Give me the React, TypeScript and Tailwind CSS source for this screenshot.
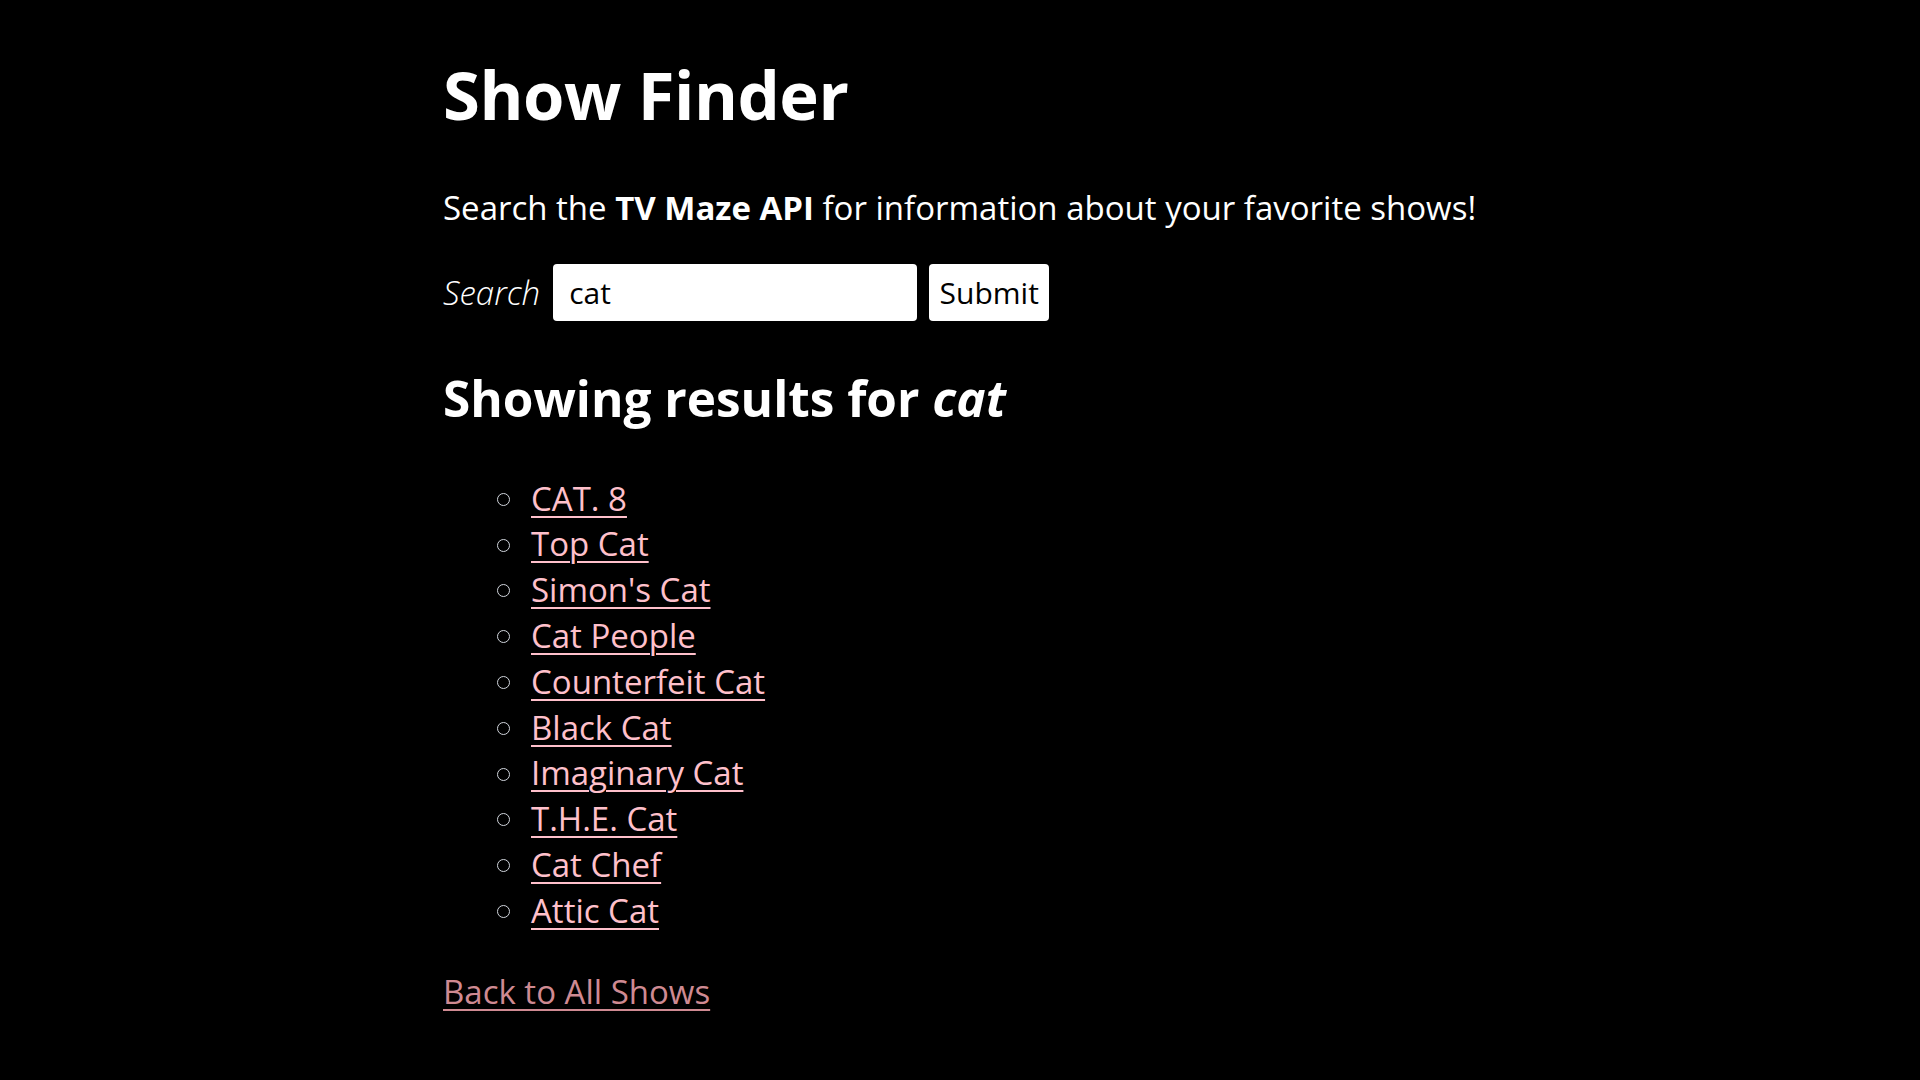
import { useState } from "react"

const shows = [
  "CAT. 8",
  "Top Cat",
  "Simon's Cat",
  "Cat People",
  "Counterfeit Cat",
  "Black Cat",
  "Imaginary Cat",
  "T.H.E. Cat",
  "Cat Chef",
  "Attic Cat",
]

export default function App() {
  const [query, setQuery] = useState("cat")

  return (
    <div className="min-h-screen bg-black text-white font-['Open_Sans','Noto_Sans',sans-serif]">
      <div className="w-[1034px] mx-auto pt-[61px] pb-10">
        <h1 className="text-[67px] font-bold leading-none tracking-[-0.5px]">Show Finder</h1>

        <p className="mt-[63px] text-[33px] leading-none">
          Search the <strong className="font-bold">TV Maze API</strong> for information about your favorite shows!
        </p>

        <form className="mt-[40px] flex items-center" onSubmit={(e) => e.preventDefault()}>
          <label htmlFor="search" className="text-[33px] italic font-light mr-[13px]">
            Search
          </label>
          <input
            id="search"
            value={query}
            onChange={(e) => setQuery(e.target.value)}
            className="w-[364px] h-[57px] rounded-[4px] bg-white text-black text-[30px] px-[16px] outline-none"
          />
          <button className="ml-[12px] w-[120px] h-[57px] rounded-[4px] bg-white text-black text-[30px]">
            Submit
          </button>
        </form>

        <h2 className="mt-[53px] text-[49.5px] font-bold leading-none">
          Showing results for <em className="italic">cat</em>
        </h2>

        <ul className="mt-[52px] pl-[54px]">
          {shows.map((show) => (
            <li key={show} className="flex items-center h-[45.8px] text-[33px]">
              <span className="w-[13px] h-[13px] rounded-full border-[1.5px] border-gray-300 mr-[21px] mt-[2px] shrink-0" />
              <a href="#" className="text-[#ffc0cb] underline underline-offset-[5px] decoration-[2px]">
                {show}
              </a>
            </li>
          ))}
        </ul>

        <p className="mt-[35px] h-[45.8px] flex items-center text-[33px]">
          <a href="#" className="text-[#cf8a92] underline underline-offset-[5px] decoration-[2px]">
            Back to All Shows
          </a>
        </p>
      </div>
    </div>
  )
}
